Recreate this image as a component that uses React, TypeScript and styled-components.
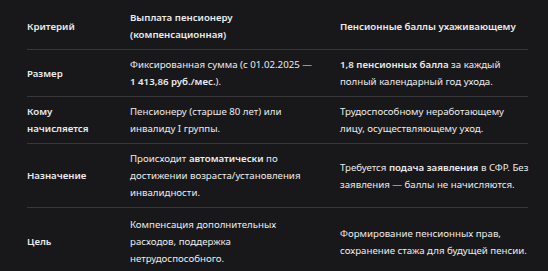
import styled, { createGlobalStyle } from 'styled-components'

const GlobalStyle = createGlobalStyle`
    html, body {
        margin: 0;
        background: #18181b;
    }
`

type Row = {
    label: React.ReactNode
    payment: React.ReactNode
    points: React.ReactNode
}

const rows: Row[] = [
    {
        label: 'Размер',
        payment: <>Фиксированная сумма (с 01.02.2025 —<br /><b>1&nbsp;413,86 руб./мес.</b>).</>,
        points: <><b>1,8 пенсионных балла</b> за каждый<br />полный календарный год ухода.</>,
    },
    {
        label: <>Кому<br />начисляется</>,
        payment: <>Пенсионеру (старше 80 лет) или<br />инвалиду I группы.</>,
        points: <>Трудоспособному неработающему<br />лицу, осуществляющему уход.</>,
    },
    {
        label: 'Назначение',
        payment: <>Происходит <b>автоматически</b> по<br />достижении возраста/установления<br />инвалидности.</>,
        points: <>Требуется <b>подача заявления</b> в СФР. Без<br />заявления — баллы не начисляются.</>,
    },
    {
        label: 'Цель',
        payment: <>Компенсация дополнительных<br />расходов, поддержка<br />нетрудоспособного.</>,
        points: <>Формирование пенсионных прав,<br />сохранение стажа для будущей пенсии.</>,
    },
]

export default function App() {
    return (
        <>
            <GlobalStyle />
            <Page>
                <Table>
                    <colgroup>
                        <col style={{ width: 103 }} />
                        <col style={{ width: 210 }} />
                        <col style={{ width: 188 }} />
                    </colgroup>
                    <thead>
                        <tr>
                            <HeadCell>Критерий</HeadCell>
                            <HeadCell>Выплата пенсионеру<br />(компенсационная)</HeadCell>
                            <HeadCell>Пенсионные баллы ухаживающему</HeadCell>
                        </tr>
                    </thead>
                    <tbody>
                        {rows.map((row, i) => (
                            <tr key={i}>
                                <Cell $strong>{row.label}</Cell>
                                <Cell>{row.payment}</Cell>
                                <Cell>{row.points}</Cell>
                            </tr>
                        ))}
                    </tbody>
                </Table>
            </Page>
        </>
    )
}

const Page = styled.div`
    padding: 1px 20px 0 27px;
    font-family: 'Noto Sans', 'Open Sans', sans-serif;
    font-size: 9.7px;
    line-height: 17px;
    color: #ececec;
`

const Table = styled.table`
    width: 501px;
    table-layout: fixed;
    border-collapse: collapse;
`

const HeadCell = styled.th`
    text-align: left;
    vertical-align: middle;
    font-weight: 600;
    white-space: nowrap;
    padding: 8px 12px 6px 0;
    border-bottom: 1px solid #38383b;
    &:last-child {
        padding-right: 0;
    }
`

const Cell = styled.td<{ $strong?: boolean }>`
    vertical-align: middle;
    white-space: nowrap;
    font-weight: ${(p) => (p.$strong ? 600 : 400)};
    padding: 6px 12px 6px 0;
    border-bottom: 1px solid #38383b;
    &:last-child {
        padding-right: 0;
    }
    tr:last-child > & {
        border-bottom: none;
        padding-top: 8px;
    }
    b {
        font-weight: 600;
    }
`
